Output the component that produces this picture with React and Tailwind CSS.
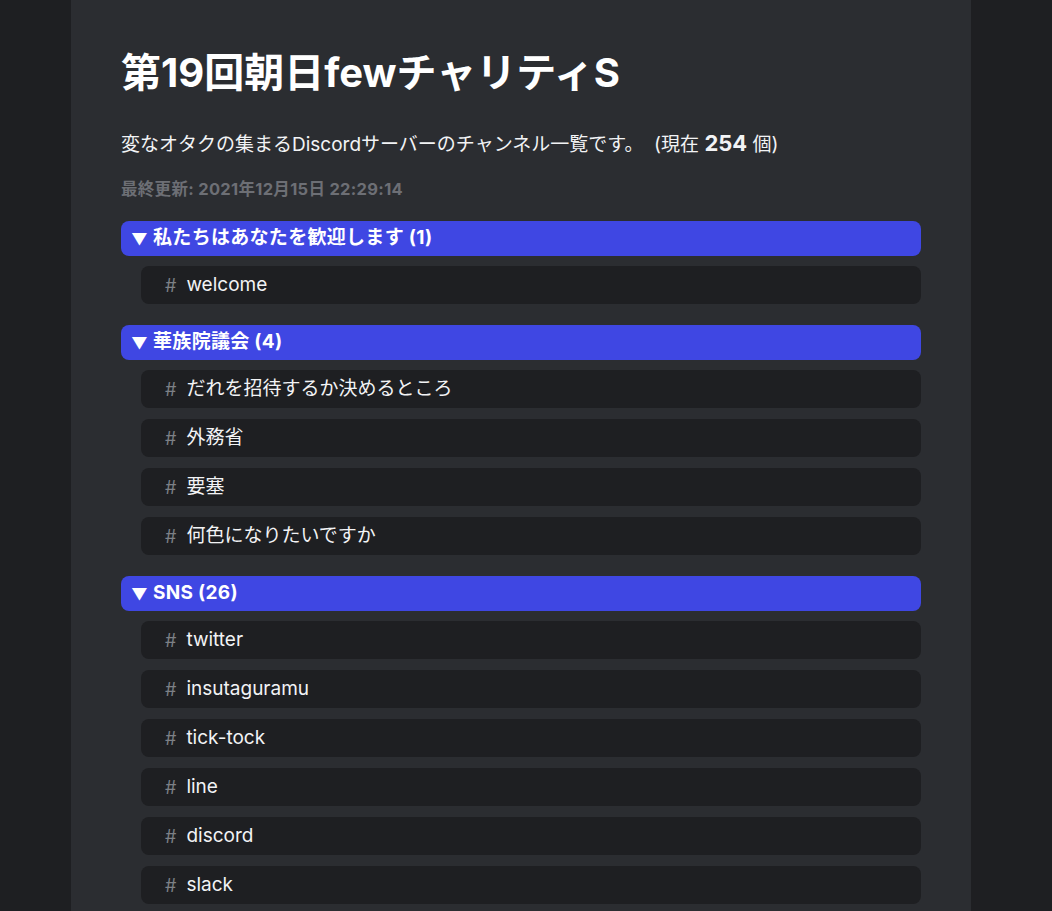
import React from "react";

const sections = [
  { name: "私たちはあなたを歓迎します", count: 1, channels: ["welcome"] },
  {
    name: "華族院議会",
    count: 4,
    channels: ["だれを招待するか決めるところ", "外務省", "要塞", "何色になりたいですか"],
  },
  {
    name: "SNS",
    count: 26,
    channels: ["twitter", "insutaguramu", "tick-tock", "line", "discord", "slack", "facebook", "mixi"],
  },
];

const font = { fontFamily: 'Inter, "Noto Sans CJK JP", sans-serif' };

export default function App() {
  return (
    <div className="min-h-screen bg-[#1e1f22] flex justify-center pr-[10px]" style={font}>
      <div className="w-[900px] bg-[#2b2d31] px-[50px] pt-[49px] pb-10 text-white">
        <h1 className="text-[40px] leading-[48px] font-bold text-white">第19回朝日fewチャリティS</h1>
        <p className="mt-[33px] text-[19px] leading-[26px] text-[#f2f3f5]">
          変なオタクの集まるDiscordサーバーのチャンネル一覧です。 &nbsp;(現在 <span className="font-bold text-[22px]">254</span> 個)
        </p>
        <p className="mt-[20px] text-[16.5px] leading-[22px] font-bold text-[#6d6f75] tracking-[0.3px]">
          最終更新: 2021年12月15日 22:29:14
        </p>
        <div className="mt-[21px] flex flex-col gap-[21px]">
          {sections.map((s) => (
            <div key={s.name} className="flex flex-col gap-[10px]">
              <div className="h-[35px] rounded-lg bg-[#3f47e3] flex items-center pl-[10px] text-[19px] font-bold text-white tracking-[0.3px]">
                <span className="text-[16px] mr-[5px]">▼</span>
                <span>
                  {s.name} ({s.count})
                </span>
              </div>
              <div className="flex flex-col gap-[11px]">
                {s.channels.map((c) => (
                  <div
                    key={c}
                    className="ml-[20px] h-[38px] rounded-lg bg-[#1e1f22] flex items-center pl-[24px] text-[19px] text-[#f2f3f5]"
                  >
                    <span className="text-[#7d8086] mr-[10px] text-[18px]">#</span>
                    <span>{c}</span>
                  </div>
                ))}
              </div>
            </div>
          ))}
        </div>
      </div>
    </div>
  );
}
